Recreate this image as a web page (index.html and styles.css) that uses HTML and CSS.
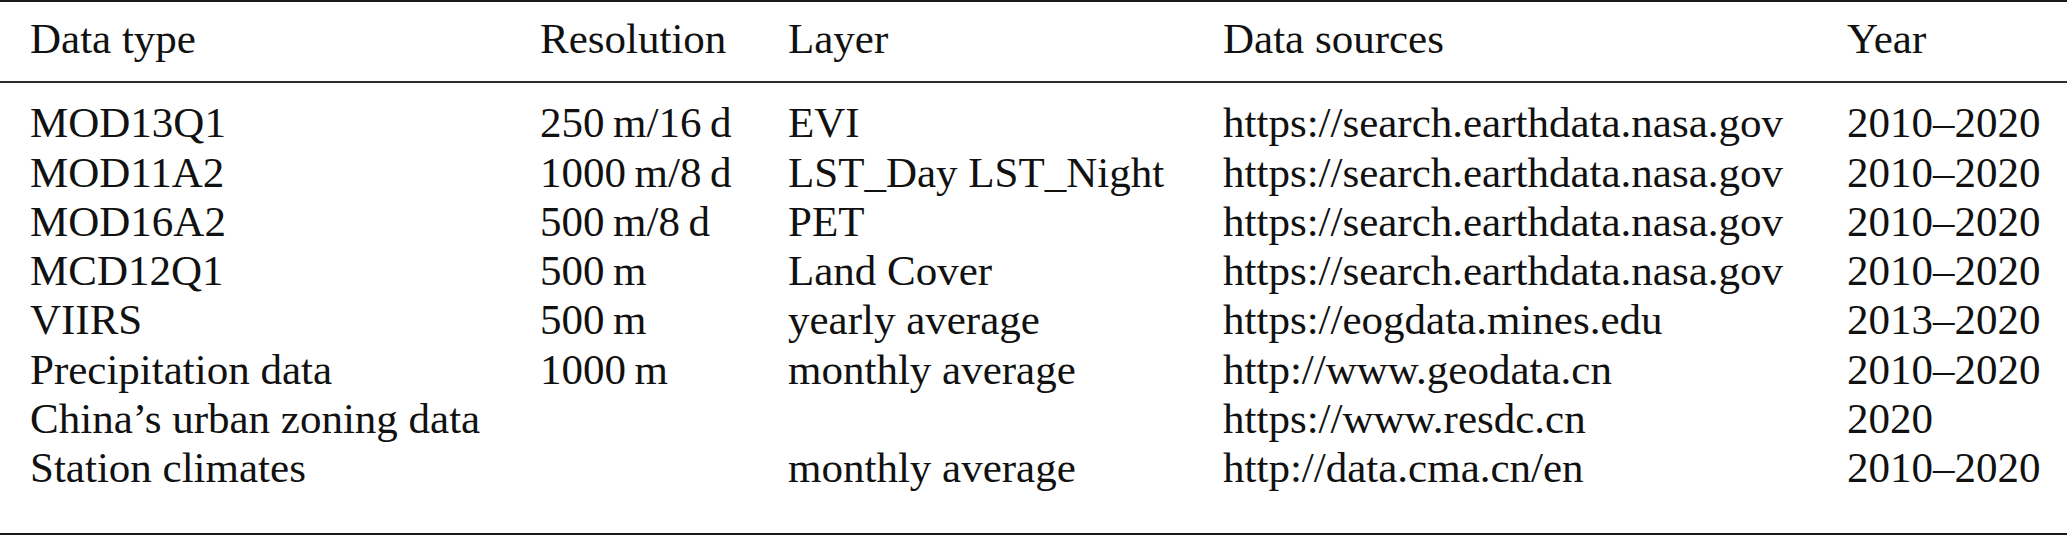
FILE: index.html
```html
<!DOCTYPE html>
<html lang="en">
<head>
<meta charset="utf-8">
<title>Data sources table</title>
<link rel="stylesheet" href="styles.css">
</head>
<body>
<table class="data-table">
  <colgroup>
    <col class="c-type">
    <col class="c-res">
    <col class="c-layer">
    <col class="c-src">
    <col class="c-year">
  </colgroup>
  <thead>
    <tr>
      <th>Data type</th>
      <th>Resolution</th>
      <th>Layer</th>
      <th>Data sources</th>
      <th>Year</th>
    </tr>
  </thead>
  <tbody>
    <tr class="first">
      <td>MOD13Q1</td>
      <td>250&thinsp;m/16&thinsp;d</td>
      <td>EVI</td>
      <td>https://search.earthdata.nasa.gov</td>
      <td>2010–2020</td>
    </tr>
    <tr>
      <td>MOD11A2</td>
      <td>1000&thinsp;m/8&thinsp;d</td>
      <td>LST_Day LST_Night</td>
      <td>https://search.earthdata.nasa.gov</td>
      <td>2010–2020</td>
    </tr>
    <tr>
      <td>MOD16A2</td>
      <td>500&thinsp;m/8&thinsp;d</td>
      <td>PET</td>
      <td>https://search.earthdata.nasa.gov</td>
      <td>2010–2020</td>
    </tr>
    <tr>
      <td>MCD12Q1</td>
      <td>500&thinsp;m</td>
      <td>Land Cover</td>
      <td>https://search.earthdata.nasa.gov</td>
      <td>2010–2020</td>
    </tr>
    <tr>
      <td>VIIRS</td>
      <td>500&thinsp;m</td>
      <td>yearly average</td>
      <td>https://eogdata.mines.edu</td>
      <td>2013–2020</td>
    </tr>
    <tr>
      <td>Precipitation data</td>
      <td>1000&thinsp;m</td>
      <td>monthly average</td>
      <td>http://www.geodata.cn</td>
      <td>2010–2020</td>
    </tr>
    <tr>
      <td>China’s urban zoning data</td>
      <td></td>
      <td></td>
      <td>https://www.resdc.cn</td>
      <td>2020</td>
    </tr>
    <tr class="last">
      <td>Station climates</td>
      <td></td>
      <td>monthly average</td>
      <td>http://data.cma.cn/en</td>
      <td>2010–2020</td>
    </tr>
  </tbody>
</table>
</body>
</html>
```

FILE: styles.css
```css
html, body {
  margin: 0;
  padding: 0;
  background: #ffffff;
}

body {
  font-family: "Liberation Serif", "Times New Roman", serif;
  font-size: 43px;
  color: #111111;
}

.data-table {
  width: 2067px;
  border-collapse: separate;
  border-spacing: 0;
  table-layout: fixed;
  border-top: 2px solid #1a1a1a;
  border-bottom: 2px solid #1a1a1a;
}

.c-type  { width: 540px; }
.c-res   { width: 248px; }
.c-layer { width: 435px; }
.c-src   { width: 624px; }
.c-year  { width: 220px; }

.data-table th,
.data-table td {
  text-align: left;
  font-weight: normal;
  line-height: 49.3px;
  padding: 0;
  white-space: nowrap;
  vertical-align: top;
}

.data-table th:first-child,
.data-table td:first-child {
  padding-left: 30px;
}

.data-table thead th {
  padding-top: 12px;
  padding-bottom: 18px;
  border-bottom: 2px solid #2a2a2a;
}

.data-table tr.first td {
  padding-top: 15px;
}

.data-table tr.last td {
  padding-bottom: 40px;
}
```
